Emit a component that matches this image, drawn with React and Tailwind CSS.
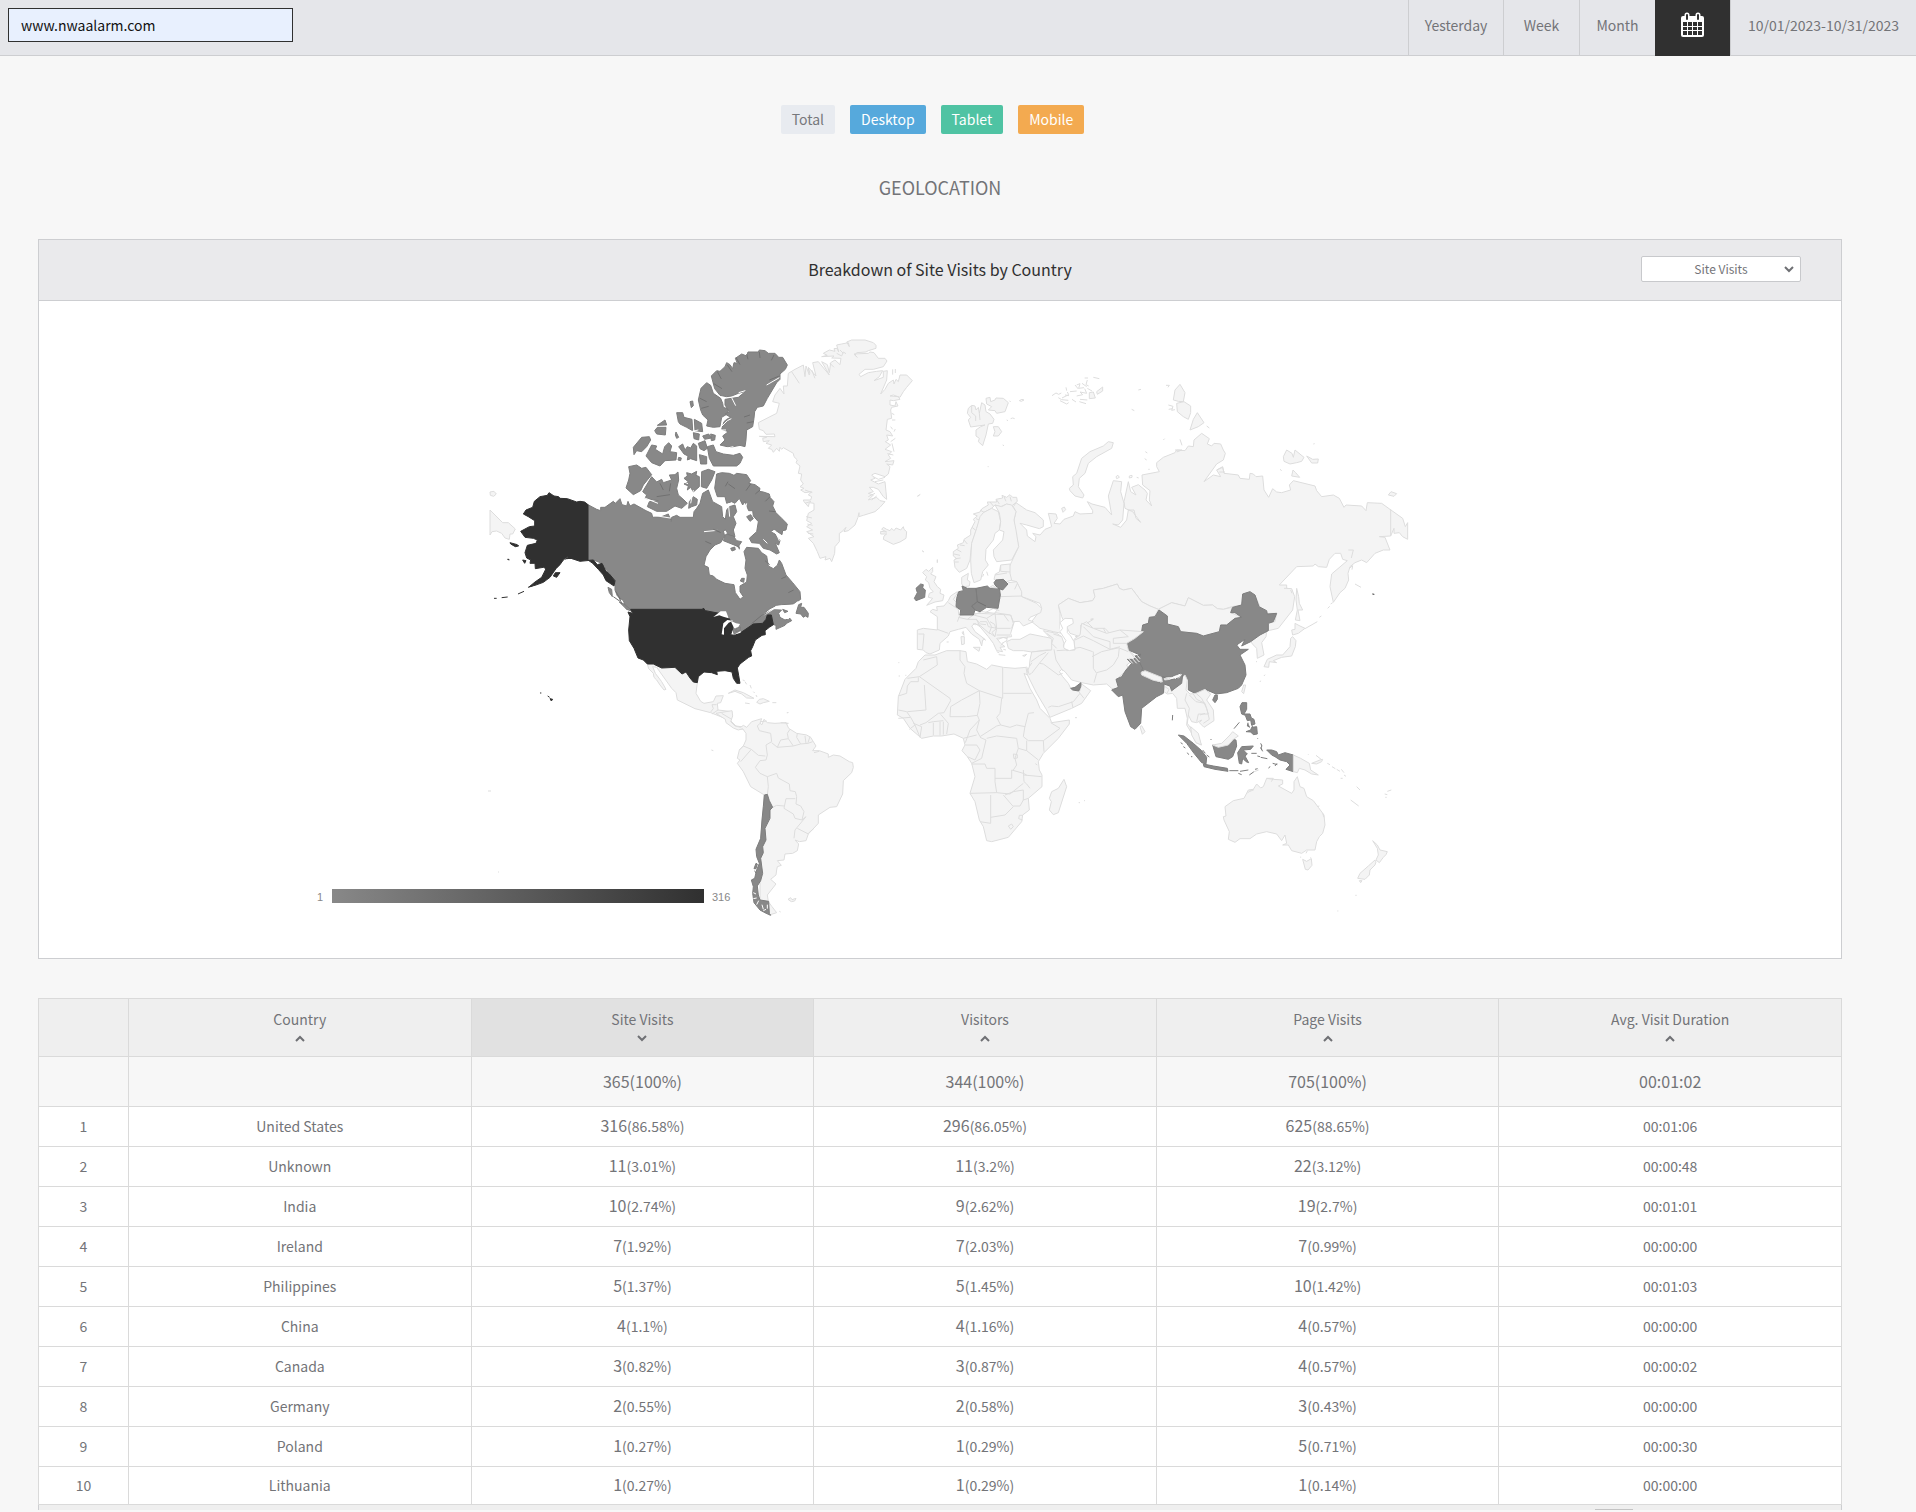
import React, { useState } from "react";

const periods = [
  { label: "Yesterday", width: "w-[95px]" },
  { label: "Week", width: "w-[76px]" },
  { label: "Month", width: "w-[76px]" },
];

const devices = [
  { label: "Total", className: "bg-[#e8ebf0] text-[#77787c]" },
  { label: "Desktop", className: "bg-[#56a9dc] text-white" },
  { label: "Tablet", className: "bg-[#4fc3a3] text-white" },
  { label: "Mobile", className: "bg-[#f3aa50] text-white" },
];

const columns = ["Country", "Site Visits", "Visitors", "Page Visits", "Avg. Visit Duration"];

const rows = [
  ["United States", ["316", "86.58%"], ["296", "86.05%"], ["625", "88.65%"], "00:01:06"],
  ["Unknown", ["11", "3.01%"], ["11", "3.2%"], ["22", "3.12%"], "00:00:48"],
  ["India", ["10", "2.74%"], ["9", "2.62%"], ["19", "2.7%"], "00:01:01"],
  ["Ireland", ["7", "1.92%"], ["7", "2.03%"], ["7", "0.99%"], "00:00:00"],
  ["Philippines", ["5", "1.37%"], ["5", "1.45%"], ["10", "1.42%"], "00:01:03"],
  ["China", ["4", "1.1%"], ["4", "1.16%"], ["4", "0.57%"], "00:00:00"],
  ["Canada", ["3", "0.82%"], ["3", "0.87%"], ["4", "0.57%"], "00:00:02"],
  ["Germany", ["2", "0.55%"], ["2", "0.58%"], ["3", "0.43%"], "00:00:00"],
  ["Poland", ["1", "0.27%"], ["1", "0.29%"], ["5", "0.71%"], "00:00:30"],
  ["Lithuania", ["1", "0.27%"], ["1", "0.29%"], ["1", "0.14%"], "00:00:00"],
];

const LAND = { fill: "#f4f4f4", stroke: "#dddddd" };
const VISITED = { fill: "#888888", stroke: "#7c7c7c" };
const TOP = { fill: "#303030", stroke: "#303030" };
const WATER = { fill: "#ffffff", stroke: "none" };
const BORDER = { fill: "none", stroke: "#dddddd" };
const DARK_BORDER = { fill: "none", stroke: "#707070" };
const FJORD = { fill: "none", stroke: "#ffffff" };

// every region is drawn at three times its size on the map
const regions = [
  {
    name: "Greenland and the Arctic",
    at: "translate(740 330) scale(0.33333)",
    shapes: [
      [LAND, "M145 130L165 118 190 105 195 140 198 108 208 135 205 112 228 138 218 98 235 95 268 135 245 95 262 104 268 128 272 98 285 90 300 104 303 85 275 84 282 78 245 80 262 76 250 70 268 60 285 64 282 56 292 55 296 66 290 45 305 42 325 38 328 50 320 36 335 30 375 30 400 38 408 46 408 55 385 62 378 66 350 68 345 76 352 82 342 72 385 70 390 66 402 68 415 85 435 85 441 93 430 110 400 118 375 118 357 133 362 140 385 128 410 124 428 122 418 140 402 152 430 142 430 124 442 122 440 150 422 192 435 178 445 160 460 150 462 162 468 148 475 155 480 135 500 135 517 152 500 172 490 185 480 202 460 195 450 198 475 200 480 208 460 212 450 210 450 225 465 228 468 215 474 228 455 232 452 240 455 265 442 268 438 300 450 305 458 318 440 315 445 330 436 335 452 345 435 358 455 365 445 375 452 385 435 395 462 392 458 405 440 402 450 410 445 432 435 440 405 430 395 435 405 445 392 450 415 462 435 455 438 485 440 508 430 500 415 478 400 472 388 472 400 485 385 490 400 495 385 510 410 502 420 512 435 515 420 532 405 545 370 556 357 560 357 548 354 562 345 585 325 602 312 605 318 592 305 606 298 610 298 635 285 650 284 670 275 695 270 685 255 690 258 680 240 685 232 665 220 640 205 625 222 620 200 605 218 600 200 590 215 580 200 572 205 550 222 540 222 520 208 518 205 530 192 515 190 510 212 510 215 500 205 495 215 485 195 488 182 480 192 475 180 470 190 462 182 450 185 432 175 430 180 408 168 398 172 390 162 380 160 370 130 353 125 358 120 352 118 364 110 355 100 367 95 358 85 355 95 345 78 340 88 332 70 335 68 325 80 322 58 319 105 320 103 312 78 313 70 302 58 298 55 278 90 260 110 250 118 220 98 215 105 195 120 175 132 192 130 168 142 168Z"],
      [BORDER, "M155 125L178 160M215 120L225 145M205 115L210 130M290 70l15 8 5 -12 8 5M300 60l10 10M270 100l12 12M452 290l6 8M462 305l4 -8M455 250l8 4M456 270l10 0M452 335l14 -10M456 340l6 25M460 375l-18 -4M458 118v16M466 117v12M400 440l15 8 20 -6M405 455l25 -5M410 498l-15 12M385 500l20 -10M195 480l22 8M195 520l18 -6M198 560l18 4M202 582l16 4M204 610l16 2"],
      [LAND, "M425 598L440 606 422 604 422 612 440 612 432 618 430 628 460 643 480 636 498 625 500 605 492 598 490 590 482 600 468 594 462 602 455 595 450 602 440 598 430 592Z"],
      [LAND, "M685 235L695 226 705 228 708 240 715 232 718 250 725 218 735 225 738 245 750 252 762 268 758 280 745 282 738 315 728 347 715 335 718 325 708 318 708 300 722 290 735 285 692 291 685 270 692 262 682 250ZM738 205L750 202 752 215 765 210 768 204 790 205 805 218 795 245 770 250 765 242 745 240 755 230 740 222ZM760 290L775 290 785 305 775 318 760 318 765 305Z"],
      [BORDER, "M695 228v20l12 10v15M718 250l2 20M838 212l8 -4 6 2-8 4zM800 270l4 2M812 266l6 -2 6 2M788 345l4 2M743 410h3M533 498l8 -5M808 212l4 4M548 662l3 4M592 688v10M936 197l12 -8 8 4 8 -4M955 203l10 6 20 2M975 195l12 2M990 185l20 -2M1005 165l10 12"],
    ],
  },
  {
    name: "North America",
    at: "translate(480 330) scale(0.33333)",
    shapes: [
      [LAND, "M30 540L68 578 85 578 106 597 98 612 90 612 88 628 75 624 65 610 50 603 36 605 30 615ZM30 486l12 -2 7 8 -8 7 -10 -3z"],
      [LAND, "M502 1002L520 1002 545 1014 585 1012 606 1032 618 1026 630 1044 640 1056 652 1058 648 1090 662 1114 672 1120 700 1115 708 1098 730 1097 722 1118 712 1120 714 1140 756 1145 752 1172 768 1188 798 1192 800 1197 776 1198 745 1180 735 1165 692 1148 645 1136 592 1110 588 1088 575 1075 530 1012 518 1010 526 1030 545 1055 558 1078 552 1080 540 1065 530 1050 522 1042 520 1030 506 1016Z"],
      [BORDER, "M692 1146l8 -10 -4 -12 14 0M714 1140l-18 12M755 1146l-30 12 -10 -4M752 1175h-14"],
      [LAND, "M745 1090L765 1080 790 1088 822 1105 800 1104 785 1092 765 1084ZM830 1117L838 1108 850 1106 868 1114 850 1118 840 1122ZM795 1119l14 2M877 1118h12M788 1050l6 2M795 1055l5 8M810 1065l4 10M820 1085l4 4M828 1095l3 6M922 1146v4"],
      [VISITED, "M324 524L350 538 362 542 362 532 375 532 400 514 406 520 420 506 426 524 440 528 444 514 450 528 462 522 480 532 498 542 515 550 518 562 545 560 565 552 574 575 575 562 590 556 600 562 640 562 642 545 650 535 660 520 668 490 685 480 698 515 725 530 728 560 736 568 740 540 748 530 765 525 770 545 760 560 768 580 760 600 765 620 745 615 738 600 730 602 734 618 722 638 705 645 690 660 678 680 672 706 685 712 688 735 700 738 710 748 735 760 762 764 766 788 772 796 780 808 790 800 780 785 780 768 800 756 802 735 795 715 798 690 792 665 800 652 835 655 845 668 860 678 865 708 880 716 892 706 898 690 905 700 918 735 938 758 960 785 962 808 940 822 905 824 890 826 870 836 845 856 862 848 880 838 905 840 896 850 900 862 915 870 930 865 935 872 920 880 915 886 888 898 888 886 880 884 874 855 862 855 858 868 848 880 820 882 785 908 764 918 756 890 745 870 715 850 676 842 668 838 460 838 440 838 430 812 412 798 405 780 405 752 388 732 366 700 340 690 324 690Z"],
      [VISITED, "M948 850L956 824 965 820 962 832 972 832 985 850 984 862 976 858 970 862 962 852ZM418 816L432 822 460 845 440 838ZM384 772L395 778 397 800 388 788Z"],
      [VISITED, "M446 410L470 405 485 415 498 412 515 434 490 465 482 482 460 494 438 474 446 450 450 430ZM515 440L530 456 545 448 550 458 575 450 568 435 585 434 594 426 596 450 590 475 595 495 612 510 622 520 605 535 585 528 560 544 530 544 502 530 508 515 535 512 495 505 500 495 488 485 500 465ZM612 445L622 438 620 428 635 432 650 424 648 436 658 440 658 470 640 486 632 472 622 480 625 468 612 462 625 455ZM665 425L685 418 705 425 695 450 680 475 664 470ZM628 515L640 500 652 508 650 525 635 530 626 535Z"],
      [VISITED, "M710 432L725 428 748 430 762 436 770 430 800 434 812 452 806 460 825 464 840 475 838 484 850 486 868 492 870 502 882 515 878 528 888 548 905 565 922 582 918 600 908 602 906 614 882 598 872 605 885 612 900 632 896 645 886 640 898 668 890 672 870 660 850 655 838 640 815 638 808 625 830 605 835 575 820 558 818 542 806 542 795 515 788 525 778 505 765 520 755 515 740 520 735 500 712 500 704 475ZM730 632L738 612 760 618 770 632 785 635 775 650 750 640ZM800 560l12 -6 8 12 -10 8zM785 745l8 0 -2 12 -10 -4zM752 655l12 -4 2 8 -10 4zM770 648l8 2v8"],
      [VISITED, "M460 352L485 322 508 320 512 330 500 350 485 365 470 362 462 374ZM498 378L515 345 530 348 526 358 548 372 554 350 566 338 575 348 570 365 590 368 588 390 555 392 540 408 515 398ZM596 350L608 342 615 360 622 350 632 354 640 340 650 348 650 392 632 386 622 390 624 378 612 372ZM532 286L555 270 560 285ZM524 302L532 292 558 292 556 315 530 312ZM590 248L608 248 612 262 636 268 638 302 620 292 600 282 595 275ZM643 268L665 280 668 305 645 302ZM630 215l8 -2 2 14 -6 6zM588 306l8 16 -6 3 -4 -10zM655 340L675 332 682 355 672 362 660 356ZM658 374L680 380 680 402 662 402ZM640 308l18 4 -2 18 -14 -4zM596 382l8 2 -2 8 -8 -2zM668 318l18 -6 8 12 -20 4zM692 312l14 4 -2 14 -10 2z"],
      [VISITED, "M682 350L700 345 708 365 730 372 760 376 780 370 788 382 780 400 770 408 700 408 688 385ZM663 175L680 158 692 166 700 190 722 205 728 220 730 232 742 236 745 250 725 262 720 290 700 292 680 288 684 270 668 255 662 240 655 210Z"],
      [VISITED, "M694 138L710 122 720 124 735 110 740 98 750 104 758 116 762 98 772 100 766 85 785 72 800 78 804 66 835 66 838 60 855 62 865 70 885 70 896 82 908 82 922 105 916 118 900 132 900 148 890 158 862 205 850 228 832 232 824 245 822 265 818 290 800 300 798 330 795 350 780 346 750 352 720 345 735 330 728 318 745 305 725 298 732 275 740 268 752 262 735 252 748 245 735 225 735 208 775 202 797 184 775 190 755 198 740 200 720 196 704 176Z"],
      [FJORD, "M722 292l20 -20 12 -6M755 203l12 24M796 182l-20 6M860 165l38 -22M708 300h30M655 300l-18 4M760 350l-18 4 40 8M708 355l22 8M862 640l-12 -12M745 520l4 40M800 520l-4 18M610 455l14 6M672 605l40 -4M520 556l50 8M484 500l50 20M640 480l-8 40M780 530l10 20M884 600l14 32"],
      [DARK_BORDER, "M768 82l12 22M800 72l4 16M838 66l2 18M700 160l26 16M712 125l12 22M742 105l14 20M882 75l-8 16M868 150l30 -12M660 205l20 10M664 235l22 -6M540 460l10 20M530 500l40 -6M572 460l-4 24M745 462l20 14M812 462l-14 20M840 480l-14 12M870 500l-14 14M885 545l-18 -2M700 598l18 8M676 634l18 8M855 692l14 12M918 740l-14 6M925 788l16 -8M744 455l-8 14M708 600l14 8M810 255l-18 6M820 275l-20 4M400 800l20 14M408 785l14 24M416 800l10 22M845 856l-30 25"],
      [TOP, "M324 524L314 516 300 514 290 516 262 506 240 505 236 500 222 498 207 488 202 496 180 500 163 514 158 532 138 540 130 552 145 560 164 572 164 588 148 590 122 604 135 622 160 625 172 630 168 640 142 646 135 668 140 684 152 690 150 700 165 700 166 716 190 712 198 716 185 742 165 756 148 770 165 766 190 757 210 742 228 716 240 704 250 690 262 680 276 686 300 694 340 690 352 704 366 700 378 724 388 732 405 752 402 768 390 760 378 752 370 735 355 718 338 700 324 690ZM114 792l18 -8M42 805h8M65 803l18 -2M144 772l14 -4M90 638L112 644 116 648 106 650 92 642ZM82 688h5v3M220 738L226 728 240 728 230 742ZM128 690l10 2 -4 8zM180 1089h4M203 1098l6 4M210 1106L218 1108 214 1113ZM256 688l8 -6 14 4M285 688l12 -4"],
      [TOP, "M452 838L668 838 670 834 676 842 718 850 748 866 760 890 752 914 764 916 785 906 820 882 848 880 858 868 862 855 874 855 880 884 868 892 855 902 856 914 846 916 826 930 818 950 812 962 815 978 806 982 780 1002 772 1014 776 1036 780 1060 770 1060 760 1045 756 1026 735 1022 710 1024 712 1034 695 1028 672 1026 655 1040 652 1058 640 1056 630 1044 618 1026 606 1032 585 1012 545 1014 520 1002 502 1002 490 990 474 984 462 955 448 932 446 900 450 860 444 846 458 850Z"],
      [WATER, "M700 861L722 844 738 844 746 865 730 860 718 856ZM730 880L725 913 732 914 732 895 746 878 760 872 742 870ZM752 872L768 880 780 882 772 896 762 894ZM762 914L782 903 782 908ZM888 828L940 824 955 812 940 850 925 868 905 862 898 850 910 838 882 838 850 858Z"],
      [VISITED, "M908 838l16 6 -10 4zM768 895l14 -4 -2 10 -12 4z"],
    ],
  },
  {
    name: "South America",
    at: "translate(680 680) scale(0.33333)",
    shapes: [
      [LAND, "M108 100L156 92 158 108 152 125 165 138 182 142 190 136 200 142 215 125 245 116 240 130 246 134 252 118 262 128 285 130 318 128 326 145 350 160 380 165 392 172 408 198 398 212 418 212 445 222 445 232 460 225 480 228 508 245 518 248 520 262 515 278 490 302 488 342 470 380 450 382 415 405 415 430 385 462 378 482 358 485 345 480 356 492 352 512 338 520 315 522 312 540 292 542 304 556 292 560 290 570 288 585 272 598 288 612 262 645 265 665 276 680 290 698 268 705 240 690 240 600 240 500 253 345 212 320 190 275 172 250 180 240 172 235 178 210 190 198 198 180 198 160 188 146 175 150 160 144 138 128 136 118Z"],
      [BORDER, "M240 130L232 138 238 152 272 160 275 185 258 195 262 225 258 240 240 242 226 262 240 280 262 290 265 320 262 345M178 210L190 198 214 208 182 245M214 208L235 226 256 228M275 188L292 202 302 180 325 176 322 160 330 148M325 176L340 198 362 192 350 172 352 160M362 192L384 190 398 185M378 190L375 168M384 188L390 170M340 198L292 202M262 290L290 280 295 294 328 312 330 332 346 335 350 350 348 372 362 378 372 395 366 420 345 415 340 402 312 385 318 356 346 356M278 382L290 376 312 378M366 420L378 410 345 450 342 475M352 445L385 462M385 460L402 445M402 218l16 -4M302 128l24 2M324 96v3M94 210l6 2M125 100l30 18"],
      [LAND, "M324 658l8 -5 4 6 12 -4 -4 8 -10 2zM298 694l4 2M242 125l18 -2M316 128l8 4"],
      [VISITED, "M253 345L262 343 268 362 278 382 270 390 270 415 255 445 258 480 248 500 250 518 242 535 248 580 242 602 232 618 235 645 240 660 266 664 268 700 272 706 255 698 240 690 222 668 218 640 220 620 214 600 224 595 230 570 238 550 230 530 228 508 242 475 246 420 250 380ZM228 550l4 2 -4 14 -6 0zM224 572l4 8"],
      [FJORD, "M246 674l4 14M236 662l-6 12M228 642l-8 -4M230 654l-10 2M250 692l8 -4M262 674v12"],
    ],
  },
  {
    name: "North Asia",
    at: "translate(1060 370) scale(0.33333)",
    shapes: [
      [LAND, "M-140 410L-132 398 -100 420 -75 428 -50 450 -50 470 -62 476 -100 465 -120 460 -100 480 -98 498 -75 515 -72 500 -82 490 -60 495 -45 478 -25 470 -30 450 -35 430 -12 432 -8 445 -18 460 0 462 12 448 40 438 45 425 60 432 98 430 98 422 82 395 96 402 135 412 155 435 145 378 160 332 185 335 182 365 192 400 188 450 175 465 158 462 182 472 200 450 205 420 222 420 228 445 242 457 218 425 195 415 192 395 205 335 212 365 228 375 215 352 235 344 255 360 262 370 258 390 275 408 268 390 270 362 248 345 246 315 298 305 290 290 290 278 310 262 345 248 350 240 375 242 385 228 400 230 402 210 425 190 448 206 442 222 455 228 462 220 482 222 490 240 496 250 490 270 470 282 432 335 460 315 482 320 470 300 488 290 492 310 510 312 535 315 540 325 568 328 570 310 580 312 588 320 608 318 612 360 626 382 638 356 650 366 665 368 692 360 688 345 700 332 765 348 770 362 785 380 820 375 838 385 852 412 858 405 905 408 918 422 922 398 965 400 990 418 1028 445 1036 470 1043 458 1043 508 1028 500 1018 488 1002 490 1002 475 992 498 958 500 975 502 990 540 970 540 945 550 920 578 905 570 885 578 870 590 864 610 866 630 855 655 840 668 820 697 810 650 815 612 862 572 848 568 842 550 825 550 808 568 800 592 775 590 765 582 760 588 710 590 658 645 680 645 680 655 695 656 704 680 698 720 655 775 625 782 620 760 645 755 650 730 620 730 600 710 585 675 570 665 548 672 545 705 515 710 490 718 472 716 458 705 430 706 385 683 375 708 335 698 295 718 270 708 245 695 215 655 190 660 178 655 172 642 130 655 100 660 105 680 98 692 60 698 25 685 -5 705 0 730 0 775 5 790 -20 785 -60 775 -85 755 -70 735 -55 715 -60 700 -100 685 -115 680 -118 660 -130 635 -150 630 -152 590 -145 575 -124 530 -135 480 -138 450 -132 425Z"],
      [BORDER, "M992 418V498M865 540l15 0 -6 24M868 595l10 -8 -2 12M885 642l18 10M803 715l6 -6M812 702l6 -4M760 222l4 -1M660 298l5 4M310 210l4 -4M360 208l6 18M256 245l6 4M254 266l6 4M265 298h4M215 118l8 4M235 60l8 -2M440 168l8 6M325 105l14 4 -4 12 10 -2M318 46h10l-4 6M326 118l12 -2M345 240l20 0M350 246l16 -6M208 318l8 -2 0 6 -8 2zM168 320l6 -4 4 6 -8 4zM230 322l6 2M470 300l18 -8 4 16M478 306l16 0M672 655l10 0M692 660l4 10"],
      [LAND, "M28 355L40 345 38 320 50 310 65 265 90 245 130 228 145 215 160 218 155 235 110 260 85 280 75 310 58 325 55 350 72 375 68 384 45 378 30 362ZM340 90L345 60 360 43 375 68 370 95 355 94ZM350 100L372 95 392 108 392 128 385 148 370 140 352 125ZM390 180L400 148 412 128 432 158 415 170ZM670 260L680 240 696 250 700 262 705 240 732 262 725 274 710 278 690 282 672 274ZM740 258l18 10 17 -1 -2 12 -18 0zM695 318l4 -18 8 8 12 14zM985 375l8 -10 17 6 -8 8zM5 415l8 -4 4 8 -8 8zM88 68l12 -2 6 18 -18 2zM110 65l18 -14 0 12 -16 10z"],
      [BORDER, "M50 45l10 -4 -4 14 16 -2M60 66l20 4 -6 -14M50 78l18 -4 -8 -8M60 88l22 2M82 30l-4 14 8 4M100 22l18 4M0 92l20 10 6 -4M6 84l20 -10 -4 -8M36 88l12 8M74 24l10 0M82 55l14 8M18 52l2 10M58 95l20 6M66 40l14 10"],
      [LAND, "M-5 705L25 685 60 698 98 692 105 680 100 660 130 655 172 642 178 655 190 660 215 655 245 695 270 708 295 718 285 738 268 742 265 760 248 765 245 785 198 815 205 840 225 858 200 885 170 930 140 925 110 910 100 870 100 810 62 790 60 800 30 790 5 740Z"],
      [BORDER, "M62 765L80 755 100 775 135 775 160 802 195 785 240 790M62 765V800L100 820 152 840 160 815 200 820M160 805l30 -5 12 8M45 800L90 795 120 820 152 838M100 845L125 840 178 832 180 860 160 885 115 905 104 870ZM195 850l40 20M190 848l42 26M92 748l8 -2M130 775l10 18 28 -2"],
      [LAND, "M295 718L335 698 375 708 385 683 430 706 458 705 472 716 490 718 515 712 512 728 545 742 525 745 500 765 482 765 478 785 430 798 410 790 362 785 355 770 322 762 322 738Z"],
      [LAND, "M572 815L590 798 620 785 618 800 605 818 612 855 592 865 590 835 580 825ZM612 890L622 868 650 855 668 855 690 830 692 805 698 800 708 812 706 830 695 858 665 862 640 872 650 878 628 875 626 892ZM705 760L720 768 735 775 715 790 698 795 695 780 705 778ZM735 776L772 755M710 655L716 680 718 700 728 720 714 720 720 752 706 750 712 720 708 690ZM545 965l6 -20 6 0 -6 26zM600 936l2 -4M612 918l3 -4M588 876l3 -2M778 742l6 -4"],
      [VISITED, "M198 815L215 805 245 785 248 765 265 760 268 742 285 740 297 720 322 738 322 762 355 770 362 785 410 790 430 798 478 785 482 765 500 765 525 745 545 742 525 728 512 728 518 712 545 705 548 672 570 665 585 675 597 710 620 722 622 732 650 730 640 755 625 760 625 782 600 795 572 815 545 828 555 808 530 825 540 838 565 838 540 855 555 885 558 915 545 945 535 955 500 968 468 972 440 960 405 970 385 960 385 930 375 925 360 910 335 920 305 922 275 912 250 905 235 890 242 875 225 858 240 855 205 840Z"],
      [{ fill: "#303030", stroke: "#303030" }, "M937 672l6 1"],
    ],
  },
  {
    name: "Europe and Africa",
    at: "translate(880 480) scale(0.33333)",
    shapes: [
      [LAND, "M220 215L235 205 232 195 250 188 252 178 272 165 272 150 285 125 280 118 292 108 280 102 300 96 306 86 325 75 322 66 350 66 348 58 368 54 366 46 380 52 390 44 398 52 410 52 412 64 395 78 380 72 362 80 345 75 335 85 310 98 300 120 290 145 275 190 270 240 260 265 238 277 225 262 222 240 230 236 220 228Z"],
      [BORDER, "M222 222l18 4M230 208l14 8M252 180l10 12M240 195l14 2M276 142l10 8M288 116l10 4M300 90l14 8M330 66l10 12M350 60l8 12M372 50l6 14M390 50l4 14M224 246l12 0M226 236l16 -2"],
      [LAND, "M335 85L355 95 362 125 358 150 345 160 340 180 318 208 316 240 325 255 308 275 302 300 282 308 274 280 272 240 275 190 290 145 300 110 310 98ZM345 75L365 80 380 72 395 75 408 95 402 120 408 150 416 200 395 240 350 245 342 230 340 210 368 180 372 155 358 150 362 125 358 98ZM320 275l4 12M308 290l3 -8"],
      [LAND, "M128 278L138 268 146 274 158 262 158 275 152 282 168 290 162 305 172 320 182 328 180 340 192 345 188 362 165 366 140 376 158 355 145 352 148 340 160 335 150 325 146 308 136 300 140 290ZM245 312L245 292 265 280 262 300 270 305 268 318 252 320ZM126 212l5 4M172 240v8"],
      [LAND, "M112 450L130 445 172 450 172 410 150 395 158 388 172 392 170 380 192 378 205 362 212 348 232 335 236 405 300 400 392 405 405 418 392 460 395 470 350 475 362 490 375 500 360 502 368 515 350 512 340 490 325 470 300 440 285 430 275 438 285 455 315 478 308 480 305 498 298 478 275 462 258 442 235 448 210 455 205 468 180 490 178 510 150 522 138 518 130 510 112 508Z"],
      [LAND, "M342 298L346 282 358 276 362 255 390 252 390 280 395 300 380 305ZM360 330L385 308 410 305 425 335 425 350 470 370 485 385 482 398 450 412 445 420 460 425 430 438 418 424 400 425 392 405 345 398 355 385ZM380 485L395 478 420 478 450 462 490 470 515 475 530 512 500 510 455 516 430 512 400 512 385 505Z"],
      [LAND, "M280 502h20l-3 12zM243 470l10 0 0 22 -8 2zM246 458l4 -4 2 12zM428 527l12 -4 -6 6zM356 524l20 2M200 486l6 0M150 412"],
      [BORDER, "M115 462L132 462 128 508M172 448L205 460M205 368L235 388M232 425L240 405M235 412L262 418 280 405M262 418L290 418 300 440M280 405L305 395 345 400 320 415 300 410ZM300 425L320 425 325 440 350 445 345 398M320 415L335 440 328 458 345 470 350 445 392 445M392 405L400 430 395 445M350 465L390 465M360 350L425 348M345 365L362 355M316 398L340 385 358 392M300 436L330 462M288 418L302 432 318 434M330 425l14 8 4 14 -12 10 8 12M355 478l14 -6 12 4M380 482l-14 8M362 258l0 16 28 2M345 285l36 -6M232 340l-12 18 10 10M412 310l-8 18M370 402l16 22M520 470L505 460M350 515l8 4M370 508l8 2M382 470l-2 14M280 430l6 4 12 -2M308 475l10 6M362 496l8 -6"],
      [LAND, "M455 516L515 510 515 478 490 452 530 460 545 470 552 490 560 512 585 510 582 478 600 465 605 430 640 445 680 460 720 450 790 455 765 475 740 490 745 510 765 535 740 555 745 565 708 600 725 615 710 628 695 625 680 612 640 615 605 608 575 600 555 575 545 568 538 575 548 590 565 610 572 625 600 632 605 612 632 632 605 670 575 685 510 712 500 690 470 640 440 580 448 560 450 540Z"],
      [BORDER, "M522 508L528 540 548 572M640 515V565L650 580 642 608M636 530L665 515 695 508 718 503 715 530 700 555 680 570 650 578M455 580L478 550 490 552 535 585 548 580M478 550L505 518M453 545l25 -18 20 -10M448 560l8 -12M505 682L515 678 535 680 580 665 600 640 596 632M600 640L612 655M575 665l4 18M585 480L610 468 640 482 690 508 720 500M610 440L640 470 690 485 690 508M720 450L745 470 700 475 700 490 740 490M720 505L745 515M530 512L560 510 600 502 638 515M500 460L520 475 515 490 530 505M545 470L520 462M585 713h6"],
      [WATER, "M540 428L555 415 578 416 580 430 562 440 562 458 582 485 585 508 568 512 552 505 555 482 540 455Z"],
      [BORDER, "M540 428L555 415 578 416 580 430 562 440 562 458 572 468 582 485 585 508 568 512 552 505 550 495 558 482 540 455 548 445ZM620 430l20 -12M632 418h8"],
      [LAND, "M135 525L165 525 200 512 240 512 258 515 262 545 290 552 320 568 335 555 370 562 405 565 438 562 442 585 432 580 450 625 470 660 480 685 510 715 515 728 568 720 568 732 535 775 490 820 475 845 478 870 486 885 486 920 445 955 448 990 428 1005 425 1025 385 1072 335 1085 320 1082 310 1040 298 1020 285 965 270 940 285 890 275 850 262 830 246 812 255 795 250 775 222 762 185 768 160 768 125 775 90 745 70 715 52 705 55 650 75 598 108 565 115 545ZM508 955L515 935 535 925 552 898 560 920 535 998 520 1004 508 990 514 965Z"],
      [BORDER, "M130 540L170 530 172 555 118 590 82 595M55 648L80 640 82 618 92 605 115 605V592M118 590L210 655M133 615L138 690 82 695M92 712L80 695 55 690M210 655L212 662 192 698 175 700 138 728 120 735M240 512L240 540 255 560 252 580 260 610 298 632 245 660 212 680 210 710 260 710 292 706 300 670 298 632 368 655V562M370 640L455 640M365 655L360 700 350 712 362 735M292 706L298 720 270 750 256 788M298 720L290 750 300 770 350 738 362 735M182 703L205 730 200 762M160 728V766M180 725V766M190 725V764M120 772L125 740 100 730M145 728L160 725 190 722M55 715L92 712 105 735 88 748M105 735L120 772M362 735L390 742 410 735 435 740 445 700 462 698M435 738L430 770 445 782 490 782 540 745 512 728M320 775L350 768 410 775 415 805 405 835 410 855 400 870M415 805L440 812 475 840M490 782L492 815M440 782L440 812M275 852L315 852 320 865 345 865 345 905 350 938 270 940M345 895L395 895 395 870 430 880 440 885M430 870L432 905 440 912 450 925M430 885L485 890M350 938L390 942 430 910M332 945L332 1030 300 1025M332 1012L375 1005 400 980 370 945M375 945L400 935 430 930 430 960 420 978 400 978M430 960L445 955M428 1020l-12 -4 2 -10 10 0M385 1038l10 -6 5 8 -8 8zM256 795L290 795 300 810 285 840 262 830M300 772L318 780 305 835 275 850M250 775L290 765M400 822l12 2 0 10 -10 2zM440 560l8 24 6 -4M472 855l-6 -4M55 548h3M56 588h4M76 586h3M596 968h4M612 962h3M118 46l-6 3"],
      [VISITED, "M103 355L112 338 108 325 122 312 130 314 128 324 136 330 134 352 108 362ZM236 335L250 332 246 318 262 325 288 325 292 365 275 378 285 390 280 405 240 405 242 390 228 380 230 355ZM288 325L322 318 330 325 358 325 361 345 354 385 320 382 300 395 285 390 275 378 292 365ZM342 308L348 300 370 298 384 312 368 330 355 325 345 315ZM572 625L585 622 603 608 602 620 596 633 578 630Z"],
      [DARK_BORDER, "M292 365L318 378"],
      [{ fill: "#f4f4f4", stroke: "#dddddd" }, "M330 322l8 -6 14 8z"],
    ],
  },
  {
    name: "South Asia and Oceania",
    at: "translate(1090 560) scale(0.33333)",
    shapes: [
      [LAND, "M225 372L240 380 245 395 262 375 268 360 285 345 292 360 288 390 300 402 318 400 345 388 362 402 350 420 370 450 372 482 342 502 328 488 335 480 320 488 305 485 295 465 292 490 305 508 322 520 334 555 318 548 302 515 290 495 292 475 285 445 262 445 260 415 248 400 232 402 222 395Z"],
      [BORDER, "M290 400L285 420 298 445 295 465M298 405L318 425 345 430 355 462 325 462 320 485M310 402L320 418 345 430M318 400L335 415 350 445 358 478 340 490M330 465L345 460M225 380l12 8 -6 12M302 512l12 4"],
      [VISITED, "M108 330L125 310 112 298 130 298 152 282 145 300 158 325 152 338 185 360 215 370 218 350 240 360 262 355 278 345 275 370 245 392 240 378 222 372 220 400 200 410 155 445 152 490 135 508 122 500 105 455 98 405 85 410 65 390 85 382 78 358 95 350Z"],
      [LAND, "M153 338L165 332 215 352 217 366 190 361 155 345ZM222 356l16 -3 2 5 -16 2zM150 500L155 497 165 515 157 523Z"],
      [{ fill: "none", stroke: "#f4f4f4" }, "M112 292l16 18M122 290l18 20M132 288l16 18M142 286l8 10M245 357l10 -10M255 357l10 -12M265 355l10 -12"],
      [VISITED, "M248 465l-1 16M368 420L375 405 382 405 382 418 375 428ZM456 428L470 428 470 448 462 462 480 462 484 474 492 478 495 492 485 495 482 480 472 482 466 466 455 462 450 440ZM468 515L482 510 485 502 500 500 502 522 490 524 482 516ZM432 506L448 487M474 488l-2 10 8 4M484 490l4 12M503 535v2"],
      [VISITED, "M265 525L282 528 310 550 335 572 350 592 348 612 335 608 312 580 290 550ZM340 612L370 618 412 625 414 634 375 628 342 620ZM418 632L445 632M450 634L475 630M478 645l14 -10M445 640l10 4M272 548l6 4M280 560l6 4M292 578l4 6M303 590h4M363 537v3M350 585l8 6M338 570l8 10M495 628l8 -2"],
      [VISITED, "M368 555L390 562 415 555 425 538 438 540 440 558 428 590 415 598 378 590ZM443 578L455 560 490 558 482 568 460 570 472 582 465 588 476 608 468 605 458 595 455 612 448 610ZM530 570L545 570 560 575 565 585 585 578 610 585 610 635 588 628 600 615 590 605 570 600 555 590 545 585ZM512 550l4 8 -4 6 6 10M484 580h16M512 592l20 4M536 625l4 -6M548 610l14 4M555 618l6 -8M502 588l8 2"],
      [LAND, "M368 555L395 550 420 525 428 515 445 528 430 538 415 555 385 562ZM302 500L325 520 334 555 318 548 305 525ZM610 585L632 595 658 610 662 630 685 645 665 642 645 630 628 625 622 638 610 635ZM665 610L690 600 698 598 695 605 680 612ZM655 582v2M678 586l18 14M712 610l8 4M726 620l10 6M740 628l10 6M754 628l8 10M762 645l6 4M752 655h6M800 680l10 10M782 720l24 18M884 702l8 2M892 694l12 -4M886 712h4M490 636l16 -6"],
      [LAND, "M400 770L408 768 405 740 430 722 462 715 475 690 490 688 500 672 512 684 520 680 530 655 550 658 578 660 578 672 565 678 605 700 612 690 612 665 622 650 630 680 642 685 650 710 670 722 685 742 702 765 705 795 698 820 688 830 680 845 675 870 650 870 635 880 605 872 595 855 578 855 590 850 585 825 575 842 560 822 530 815 500 822 480 836 450 836 435 847 415 838 418 815 402 780ZM638 898l12 6 14 -8 2 20 -12 14 -8 -2zM848 842L862 855 870 870 892 875 888 884 880 892 868 908 858 900 865 885 862 865ZM855 900L858 906 855 915 840 930 838 945 825 958 803 955 810 940 835 918ZM808 962l8 0 -4 6zM796 1006h4M742 1053h3M632 890v3M662 892v3"],
      [BORDER, "M530 655l20 0 -6 10M472 700l10 -10M478 695l14 -6M698 760l4 12M688 738l-6 2M648 880l4 -8"],
    ],
  },
];

const CalendarIcon = () => (
  <svg width="23" height="26" viewBox="0 0 23 26" aria-hidden="true">
    <path fill="#fff" d="M2 4h19a2 2 0 0 1 2 2v17a2 2 0 0 1-2 2H2a2 2 0 0 1-2-2V6a2 2 0 0 1 2-2z" />
    <path stroke="#fff" strokeWidth="5" strokeLinecap="round" d="M6 3v4M17 3v4" />
    <path stroke="#303030" strokeWidth="2" strokeLinecap="round" d="M6 3v4M17 3v4" />
    <path
      fill="#303030"
      d="M2 10h4v4H2zM7 10h4v4H7zM12 10h4v4h-4zM17 10h4v4h-4zM2 15h4v3H2zM7 15h4v3H7zM12 15h4v3h-4zM17 15h4v3h-4zM2 19h4v4H2zM7 19h4v4H7zM12 19h4v4h-4zM17 19h4v4h-4z"
    />
  </svg>
);

const SortIcon = ({ down }) => (
  <svg width="10" height="7" viewBox="0 0 10 7" aria-hidden="true">
    <path d={down ? "M1 1l4 4 4-4" : "M1 6l4-4 4 4"} fill="none" stroke="#6f7074" strokeWidth="2" />
  </svg>
);

const WorldMap = () => (
  <svg className="block h-[657px] w-full" viewBox="39 301 1802 657" role="img" aria-label="Site visits by country">
    <defs>
      <linearGradient id="visitScale" x1="0" x2="1" y1="0" y2="0">
        <stop offset="0" stopColor="#888888" />
        <stop offset="1" stopColor="#303030" />
      </linearGradient>
    </defs>
    {regions.map((region) => (
      <g key={region.name} transform={region.at} strokeWidth="3" strokeLinejoin="round">
        {region.shapes.map(([paint, d], i) => (
          <path key={i} d={d} fill={paint.fill} stroke={paint.stroke} />
        ))}
      </g>
    ))}
    <path d="M488 791h3M498 872h1" stroke="#dddddd" />
    <rect x="332" y="889" width="372" height="14" fill="url(#visitScale)" />
    <g fill="#888888" className="font-['Liberation_Sans',sans-serif] text-[11px]">
      <text x="317" y="901">1</text>
      <text x="712" y="901">316</text>
    </g>
  </svg>
);

const Count = ({ value }) => (
  <>
    <span className="text-[16px]">{value[0]}</span>({value[1]})
  </>
);

const App = () => {
  const [site, setSite] = useState("www.nwaalarm.com");
  const [metric, setMetric] = useState("Site Visits");

  return (
    <div className="min-h-screen bg-[#f7f7f7] font-['Noto_Sans_CJK_SC',sans-serif] text-[14px] leading-5 text-[#737478]">
      <header className="flex h-14 justify-between border-b border-[#cdced1] bg-[#e5e6ea]">
        <input
          type="text"
          aria-label="Site"
          value={site}
          onChange={(e) => setSite(e.target.value)}
          className="mt-2 ml-2 h-[34px] w-[285px] border border-[#303030] bg-[#e8f0fe] px-3 text-[#111]"
        />
        <nav className="-mb-px flex">
          {periods.map((period) => (
            <button key={period.label} className={`${period.width} border-l border-[#cdced1] pb-1.5`}>
              {period.label}
            </button>
          ))}
          <button aria-label="Custom range" className="flex w-[75px] items-center justify-center bg-[#303030] pb-1.5">
            <CalendarIcon />
          </button>
          <button className="w-[186px] border-l border-[#cdced1] pb-1.5">10/01/2023-10/31/2023</button>
        </nav>
      </header>

      <main className="pr-[74px] pl-[38px]">
        <div className="flex justify-center pt-[49px]">
          {devices.map((device) => (
            <button key={device.label} className={`mr-[15px] h-[29px] rounded-xs px-[11px] pb-0.5 ${device.className}`}>
              {device.label}
            </button>
          ))}
        </div>
        <h1 className="mt-[41px] text-center text-[18px] leading-6">GEOLOCATION</h1>

        <section className="mt-10 border border-[#cdced1] bg-white">
          <div className="grid h-[61px] grid-cols-[1fr_auto_1fr] items-center border-b border-[#cdced1] bg-[#eaeaec] pb-0.5">
            <h2 className="col-start-2 text-[16px] leading-6 text-[#303030]">Breakdown of Site Visits by Country</h2>
            <div className="relative mr-10 h-[26px] w-[160px] justify-self-end">
              <select
                aria-label="Metric"
                value={metric}
                onChange={(e) => setMetric(e.target.value)}
                className="h-full w-full appearance-none rounded-xs border border-[#c8c9cc] bg-white text-center text-[12px] leading-4 [text-align-last:center]"
              >
                {columns.slice(1).map((name) => (
                  <option key={name}>{name}</option>
                ))}
              </select>
              <span className="pointer-events-none absolute inset-y-0 right-[7px] flex items-center">
                <SortIcon down />
              </span>
            </div>
          </div>
          <WorldMap />
        </section>

        <table className="mt-[39px] w-full table-fixed border-collapse text-center [&_td]:border [&_td]:border-[#dadada] [&_td]:pb-0.5 [&_th]:border [&_th]:border-[#dadada]">
          <thead>
            <tr className="h-[58px] bg-[#efefef]">
              <th className="w-[90px]"></th>
              {columns.map((name) => (
                <th key={name} className={name === metric ? "bg-[#e1e1e1] font-normal" : "font-normal"}>
                  <button className="w-full">
                    {name}
                    <span className="mt-1.5 flex justify-center">
                      <SortIcon down={name === metric} />
                    </span>
                  </button>
                </th>
              ))}
            </tr>
          </thead>
          <tbody>
            <tr className="h-[50px] text-[16px]">
              <td></td>
              <td></td>
              <td>365(100%)</td>
              <td>344(100%)</td>
              <td>705(100%)</td>
              <td>00:01:02</td>
            </tr>
            {rows.map(([country, visits, visitors, pages, duration], i) => (
              <tr key={country} className="h-10 bg-white last:h-[38px]">
                <td>{i + 1}</td>
                <td>{country}</td>
                <td><Count value={visits} /></td>
                <td><Count value={visitors} /></td>
                <td><Count value={pages} /></td>
                <td>{duration}</td>
              </tr>
            ))}
          </tbody>
        </table>
        <div className="flex h-[5px] items-end justify-end border-x border-[#cdced1] bg-[#efefef] pr-[208px]">
          <span className="h-px w-[38px] bg-[#c4c4c4]" />
        </div>
      </main>
    </div>
  );
};

export default App;
